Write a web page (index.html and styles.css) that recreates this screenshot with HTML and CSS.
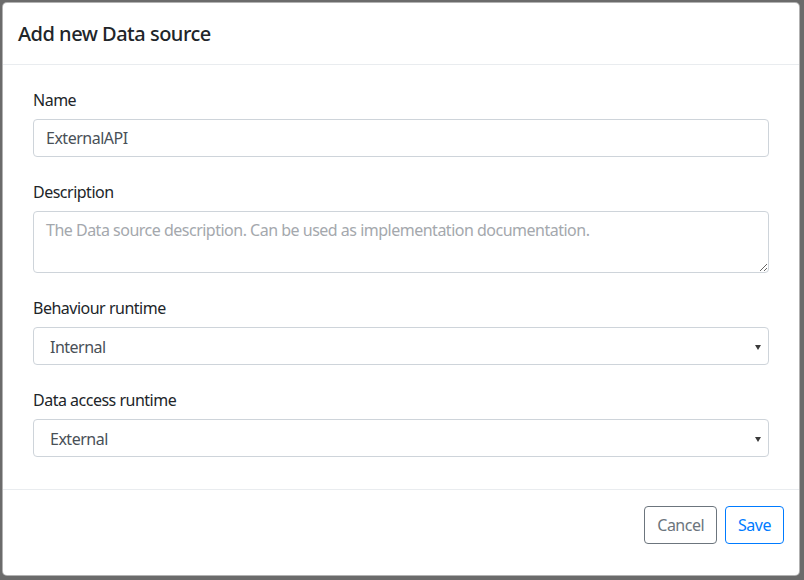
FILE: index.html
```html
<!DOCTYPE html>
<html>
<head>
<meta charset="utf-8">
<link rel="stylesheet" href="styles.css">
</head>
<body>
<div class="modal">
  <div class="modal-header">
    <h5 class="modal-title">Add new Data source</h5>
  </div>
  <div class="modal-body">
    <div class="form-group">
      <label class="form-label">Name</label>
      <input class="form-control" type="text" value="ExternalAPI">
    </div>
    <div class="form-group">
      <label class="form-label">Description</label>
      <textarea class="form-control textarea" placeholder="The Data source description. Can be used as implementation documentation."></textarea>
    </div>
    <div class="form-group">
      <label class="form-label">Behaviour runtime</label>
      <div class="select-wrap">
        <select class="form-control select"><option>Internal</option></select>
      </div>
    </div>
    <div class="form-group">
      <label class="form-label">Data access runtime</label>
      <div class="select-wrap">
        <select class="form-control select"><option>External</option></select>
      </div>
    </div>
  </div>
  <div class="modal-footer">
    <button class="btn btn-secondary">Cancel</button>
    <button class="btn btn-primary">Save</button>
  </div>
</div>
</body>
</html>
```
FILE: styles.css
```css
* { box-sizing: border-box; }
html, body { margin: 0; height: 100%; }
body {
  background: #6b6b6b;
  padding: 2px 4px 4px 2px;
  font-family: "Noto Sans", "Open Sans", sans-serif;
  letter-spacing: -0.5px;
  color: #212529;
}
.modal {
  height: 100%;
  background: #fff;
  border: 1px solid rgba(0,0,0,0.3);
  border-radius: 5px;
  display: flex;
  flex-direction: column;
}
.modal-header {
  padding: 16px 15px;
  border-bottom: 1px solid #e9ecef;
}
.modal-title {
  margin: 0;
  font-size: 20px;
  font-weight: 500;
  line-height: 29px;
}
.modal-body {
  padding: 23px 30px 9px;
}
.form-group { margin-bottom: 23px; }
.form-label {
  display: block;
  font-size: 16px;
  line-height: 24px;
  margin-bottom: 7px;
}
.form-control {
  display: block;
  width: 100%;
  height: 38px;
  padding: 6px 12px;
  font-family: inherit;
  letter-spacing: inherit;
  font-size: 16px;
  line-height: 24px;
  color: #495057;
  background: #fff;
  border: 1px solid #ced4da;
  border-radius: 4px;
  outline: none;
}
.textarea {
  height: 62px;
  resize: vertical;
}
.textarea::placeholder { color: #a4a8ad; opacity: 1; }
.select-wrap { position: relative; }
.select {
  appearance: none;
  -webkit-appearance: none;
  padding-left: 16px;
  padding-top: 7px;
  padding-bottom: 5px;
}
.select-wrap::after {
  content: "";
  position: absolute;
  right: 8px;
  top: 18px;
  border-left: 3px solid transparent;
  border-right: 3px solid transparent;
  border-top: 5px solid #3a3a3a;
}
.modal-footer {
  margin-top: auto;
  border-top: 1px solid #e9ecef;
  padding: 16px 15px;
  display: flex;
  justify-content: flex-end;
  gap: 8px;
  flex: 1;
  align-items: flex-start;
}
.btn {
  font-family: inherit;
  letter-spacing: inherit;
  font-size: 16px;
  line-height: 24px;
  padding: 6px 12px;
  background: #fff;
  border: 1px solid;
  border-radius: 4px;
}
.btn-secondary { color: #6c757d; border-color: #6c757d; }
.btn-primary { color: #007bff; border-color: #007bff; }
```
